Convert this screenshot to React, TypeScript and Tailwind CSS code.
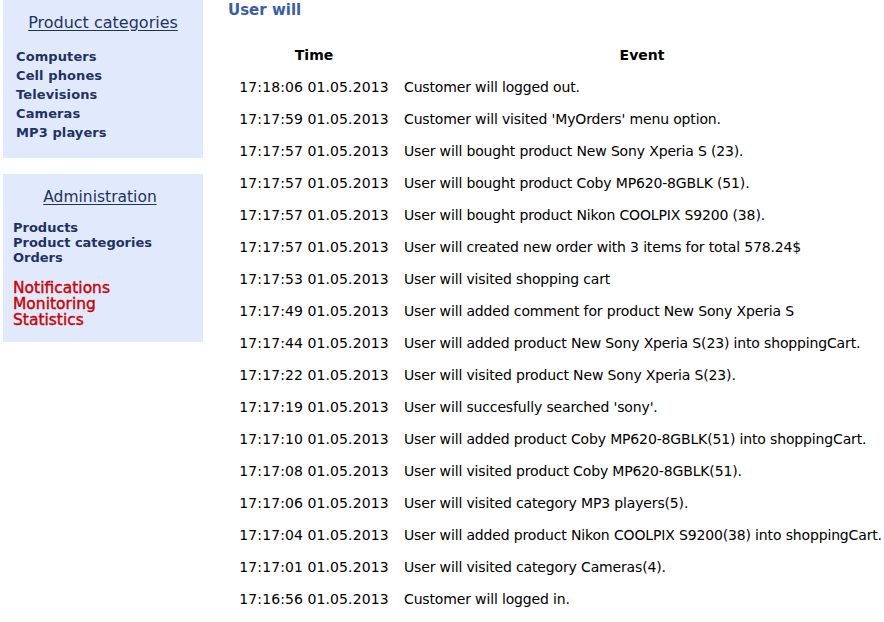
const categories = ["Computers", "Cell phones", "Televisions", "Cameras", "MP3 players"];
const adminLinks = ["Products", "Product categories", "Orders"];
const monitorLinks = ["Notifications", "Monitoring", "Statistics"];

const events: [string, string][] = [
  ["17:18:06 01.05.2013", "Customer will logged out."],
  ["17:17:59 01.05.2013", "Customer will visited 'MyOrders' menu option."],
  ["17:17:57 01.05.2013", "User will bought product New Sony Xperia S (23)."],
  ["17:17:57 01.05.2013", "User will bought product Coby MP620-8GBLK (51)."],
  ["17:17:57 01.05.2013", "User will bought product Nikon COOLPIX S9200 (38)."],
  ["17:17:57 01.05.2013", "User will created new order with 3 items for total 578.24$"],
  ["17:17:53 01.05.2013", "User will visited shopping cart"],
  ["17:17:49 01.05.2013", "User will added comment for product New Sony Xperia S"],
  ["17:17:44 01.05.2013", "User will added product New Sony Xperia S(23) into shoppingCart."],
  ["17:17:22 01.05.2013", "User will visited product New Sony Xperia S(23)."],
  ["17:17:19 01.05.2013", "User will succesfully searched 'sony'."],
  ["17:17:10 01.05.2013", "User will added product Coby MP620-8GBLK(51) into shoppingCart."],
  ["17:17:08 01.05.2013", "User will visited product Coby MP620-8GBLK(51)."],
  ["17:17:06 01.05.2013", "User will visited category MP3 players(5)."],
  ["17:17:04 01.05.2013", "User will added product Nikon COOLPIX S9200(38) into shoppingCart."],
  ["17:17:01 01.05.2013", "User will visited category Cameras(4)."],
  ["17:16:56 01.05.2013", "Customer will logged in."],
];

export default function App() {
  return (
    <div className="flex min-h-[622px] w-[884px] overflow-hidden bg-white font-['DejaVu_Sans',sans-serif]">
      {/* sidebar */}
      <aside className="ml-[3px] flex w-[200px] shrink-0 flex-col gap-[16px]">
        <div className="bg-[#e1eafd] pt-[13px] pb-[16px] pl-[13px]">
          <h3 className="text-center text-[16px] leading-[20px] text-[#1f3264] underline underline-offset-[2px] pr-[13px]">
            Product categories
          </h3>
          <ul className="mt-[14px] text-[13px] font-bold leading-[19px] tracking-[0.1px] text-[#1f3264]">
            {categories.map((c) => (
              <li key={c}>{c}</li>
            ))}
          </ul>
        </div>

        <div className="bg-[#e1eafd] pt-[13px] pb-[14px] pl-[10px]">
          <h3 className="text-center text-[15.5px] leading-[20px] text-[#1f3264] underline underline-offset-[2px] pr-[16px]">
            Administration
          </h3>
          <ul className="mt-[13px] text-[13px] font-bold leading-[15px] text-[#1f3264]">
            {adminLinks.map((c) => (
              <li key={c}>{c}</li>
            ))}
          </ul>
          <ul className="mt-[15px] text-[15.5px] leading-[16px] text-[#cc0000] [-webkit-text-stroke:0.4px_#cc0000]">
            {monitorLinks.map((c) => (
              <li key={c}>{c}</li>
            ))}
          </ul>
        </div>
      </aside>

      {/* main */}
      <main className="ml-[25px] flex-1">
        <h2 className="mt-[1px] text-[15px] font-bold leading-[18px] text-[#3a5da5]">User will</h2>
        <table className="mt-[20px] w-[656px] table-fixed border-collapse text-[14px] text-black">
          <colgroup>
            <col className="w-[172px]" />
            <col />
          </colgroup>
          <thead>
            <tr className="h-[32px]">
              <th className="text-center font-bold">Time</th>
              <th className="text-center font-bold">Event</th>
            </tr>
          </thead>
          <tbody>
            {events.map(([t, e], i) => (
              <tr key={i} className="h-[32px]">
                <td className="text-center whitespace-nowrap tracking-[0.1px]">{t}</td>
                <td className="pl-[4px] whitespace-nowrap tracking-[-0.15px]">{e}</td>
              </tr>
            ))}
          </tbody>
        </table>
      </main>
    </div>
  );
}
